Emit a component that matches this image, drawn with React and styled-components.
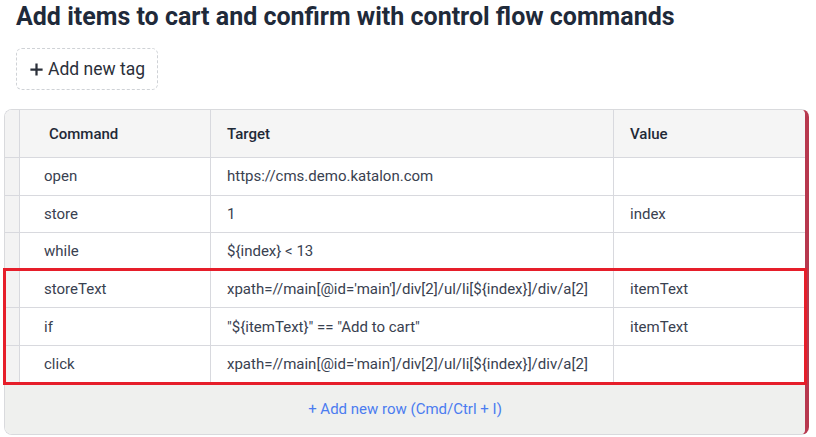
import * as React from 'react';
import styled, { createGlobalStyle } from 'styled-components';

const GlobalStyle = createGlobalStyle`
  body {
    margin: 0;
    background: #fff;
    font-family: Roboto, "Liberation Sans", sans-serif;
  }
`;

const Page = styled.div`
  padding: 2px 7px 0 4px;
`;
const Title = styled.h1`
  margin: 0 0 0 12px;
  font-size: 25px;
  line-height: 30px;
  font-weight: 700;
  color: #1f2a3a;
`;
const TagButton = styled.button`
  display: flex;
  align-items: center;
  gap: 4px;
  margin: 16px 0 19px 12px;
  height: 42px;
  padding: 0 12px 0 12px;
  border: 1px dashed #cfd2d6;
  border-radius: 6px;
  background: #fff;
  font-family: inherit;
  font-size: 17.5px;
  color: #2b303a;
`;
const Card = styled.div`
  border: 1px solid #d9dadd;
  border-right: 4px solid #b7384e;
  border-radius: 8px;
  background: #fff;
`;
const Row = styled.div`
  box-sizing: border-box;
  display: grid;
  grid-template-columns: 15px 191px 403px 1fr;
  height: ${(p) => p.$height || 37.6}px;
  border-top: ${(p) => (p.$first ? 'none' : '1px solid #d8d9de')};
  background: ${(p) => (p.$head ? '#f5f5f5' : '#fff')};
  border-radius: ${(p) => (p.$head ? '7px 4px 0 0' : '0')};
`;
const Handle = styled.div`
  background: #f3f3f3;
  border-right: 1px solid #d8d9de;
  border-radius: ${(p) => (p.$head ? '7px 0 0 0' : '0')};
`;
const Cell = styled.div`
  display: flex;
  align-items: center;
  padding-left: ${(p) => p.$pad || 16}px;
  border-right: ${(p) => (p.$last ? 'none' : '1px solid #d8d9de')};
  font-size: 15px;
  font-weight: ${(p) => (p.$head ? 500 : 400)};
  color: ${(p) => (p.$head ? '#1f2937' : '#394150')};
  white-space: nowrap;
`;
const Highlight = styled.div`
  outline: 3px solid #e61e2a;
  outline-offset: -1px;
  position: relative;
`;
const Footer = styled.div`
  display: flex;
  align-items: center;
  justify-content: center;
  height: 50px;
  border-top: 1px solid #d8d9de;
  background: #eff0ee;
  border-radius: 0 0 4px 7px;
  font-size: 15px;
  color: #4b7cf0;
`;

const rows = [
  ['open', 'https://cms.demo.katalon.com', ''],
  ['store', '1', 'index'],
  ['while', '${index} < 13', ''],
];
const marked = [
  ['storeText', "xpath=//main[@id='main']/div[2]/ul/li[${index}]/div/a[2]", 'itemText'],
  ['if', '"${itemText}" == "Add to cart"', 'itemText'],
  ['click', "xpath=//main[@id='main']/div[2]/ul/li[${index}]/div/a[2]", ''],
];

const CommandRow = ({ cells }) => (
  <Row>
    <Handle />
    <Cell $pad={24}>{cells[0]}</Cell>
    <Cell>{cells[1]}</Cell>
    <Cell $last>{cells[2]}</Cell>
  </Row>
);

const Plus = () => (
  <svg width="15" height="15" viewBox="0 0 16 16">
    <path d="M8 1.5v13M1.5 8h13" stroke="#2b303a" strokeWidth="2.4" />
  </svg>
);

export default function App() {
  return (
    <Page>
      <GlobalStyle />
      <Title>Add items to cart and confirm with control flow commands</Title>
      <TagButton>
        <Plus />
        Add new tag
      </TagButton>
      <Card>
        <Row $head $first $height={47}>
          <Handle $head />
          <Cell $head $pad={29}>Command</Cell>
          <Cell $head>Target</Cell>
          <Cell $head $last>Value</Cell>
        </Row>
        {rows.map((r) => (
          <CommandRow key={r[0]} cells={r} />
        ))}
        <Highlight>
          {marked.map((r) => (
            <CommandRow key={r[0]} cells={r} />
          ))}
        </Highlight>
        <Footer>+ Add new row (Cmd/Ctrl + I)</Footer>
      </Card>
    </Page>
  );
}
